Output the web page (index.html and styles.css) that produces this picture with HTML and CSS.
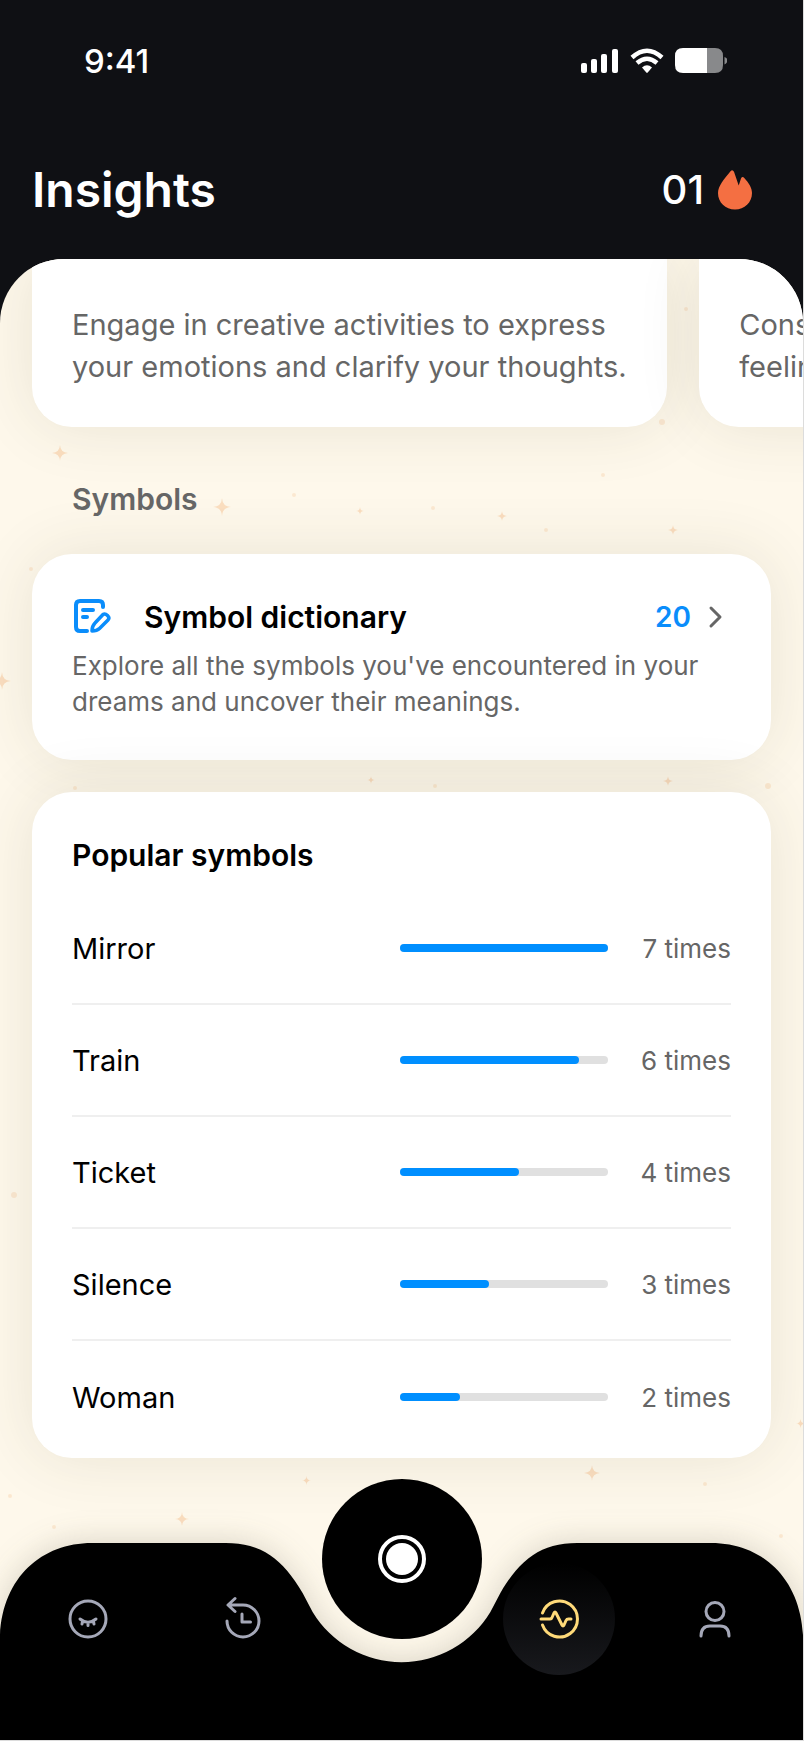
FILE: index.html
```html
<!DOCTYPE html>
<html lang="en">
<head>
    <meta charset="UTF-8">
    <meta name="viewport" content="width=device-width, initial-scale=1.0">
    <title>Insights</title>
    <link rel="stylesheet" href="styles.css">
</head>
<body>
    <div class="screen">
        <div class="status-bar">
            <span class="time">9:41</span>
            <svg width="146" height="26" viewBox="0 0 146 26" fill="#fff">
                <rect x="0" y="15" width="6" height="10" rx="2"/>
                <rect x="10" y="11" width="6" height="14" rx="2"/>
                <rect x="20" y="6" width="6" height="19" rx="2"/>
                <rect x="31" y="1" width="6" height="24" rx="2"/>
                <g fill="none" stroke="#fff" stroke-width="4.500">
                    <path d="M51 9.500Q66 -4 81 9.500"/>
                    <path d="M56 15Q66 6.500 76 15"/>
                </g>
                <path d="M61 19.500Q66 15 71 19.500L66.700 24.500Q66 25.300 65.300 24.500Z"/>
                <path d="M102 0H126V25H102Q94 25 94 17V8Q94 0 102 0Z"/>
                <path fill="#88898b" d="M126 0H134Q142 0 142 8V17Q142 25 134 25H126ZM143.500 9Q146.500 10 146.500 12.500T143.500 16.500Z"/>
            </svg>
        </div>

        <header class="header">
            <h1>Insights</h1>
            <div class="streak">
                <span>01</span>
                <svg width="34" height="40" viewBox="0 0 34 40">
                    <path fill="#f46f42" d="M12.500 1.200Q14.500 -1 16 1.800L20.700 15.500L23 8.500Q24.300 6 26.300 8C31 13 34 18 34 23C34 32.500 26.500 39.500 17 39.500S0 32.500 0 23C0 16 6 9 12.500 1.200Z"/>
                </svg>
            </div>
        </header>

        <div class="sheet">
            <svg class="stars" fill="#f9d3ad" aria-hidden="true">
                <defs>
                    <symbol id="star" viewBox="0 0 20 20">
                        <path d="M10 0Q10.500 9.500 20 10Q10.500 10.500 10 20Q9.500 10.500 0 10Q9.500 9.500 10 0Z"/>
                    </symbol>
                </defs>
                <use href="#star" x="52" y="186" width="16" height="16"/>
                <use href="#star" x="213" y="239" width="18" height="18"/>
                <use href="#star" x="-7" y="413" width="18" height="18"/>
                <use href="#star" x="584" y="1206" width="16" height="16"/>
                <use href="#star" x="175" y="1253" width="14" height="14"/>
                <use href="#star" x="497" y="252" width="10" height="10"/>
                <use href="#star" x="668" y="266" width="10" height="10"/>
                <use href="#star" x="356" y="248" width="8" height="8"/>
                <use href="#star" x="663" y="516" width="10" height="12"/>
                <use href="#star" x="367" y="516" width="8" height="10"/>
                <use href="#star" x="302" y="1217" width="9" height="9"/>
                <use href="#star" x="796" y="1160" width="9" height="9"/>
                <g opacity=".6">
                    <circle cx="686" cy="50" r="2"/>
                    <circle cx="662" cy="163" r="3"/>
                    <circle cx="294" cy="236" r="2"/>
                    <circle cx="433" cy="249" r="2"/>
                    <circle cx="546" cy="271" r="2"/>
                    <circle cx="603" cy="216" r="2"/>
                    <circle cx="31" cy="310" r="2"/>
                    <circle cx="75" cy="529" r="2"/>
                    <circle cx="768" cy="527" r="3"/>
                    <circle cx="435" cy="527" r="2"/>
                    <circle cx="14" cy="936" r="3"/>
                    <circle cx="54" cy="1268" r="2"/>
                    <circle cx="705" cy="1225" r="2"/>
                    <circle cx="781" cy="1277" r="2"/>
                    <circle cx="10" cy="1237" r="2"/>
                </g>
            </svg>

            <div class="tips">
                <p class="tip">Engage in creative activities to express<br>your emotions and clarify your thoughts.</p>
                <p class="tip">Consider sharing your<br>feelings with a friend.</p>
            </div>

            <main class="content">
                <h2 class="section-title">Symbols</h2>

                <a class="card dictionary" href="#">
                    <span class="dictionary-row">
                        <svg width="40" height="40" viewBox="0 0 40 40" fill="none" stroke="#0a8dfb" stroke-width="4" stroke-linecap="round" stroke-linejoin="round">
                            <path d="M31 10V8Q31 4 27 4H8Q4 4 4 8V30Q4 34 8 34H15"/>
                            <path d="M11 13H21M11 20H15"/>
                            <path d="M20 34Q20 29 23 26L31 17.500Q33 16 35.500 18.500T36 23L27.500 31.500Q25 34 20 34Z" stroke-width="3.500"/>
                        </svg>
                        <span class="dictionary-name">Symbol dictionary</span>
                        <span class="dictionary-count">20</span>
                        <svg width="32" height="32" viewBox="0 0 32 32" fill="none" stroke="#666" stroke-width="3" stroke-linecap="round" stroke-linejoin="round">
                            <path d="M12 7L21 16L12 25"/>
                        </svg>
                    </span>
                    <span class="dictionary-text">Explore all the symbols you've encountered in your dreams and uncover their meanings.</span>
                </a>

                <section class="card popular">
                    <h3>Popular symbols</h3>
                    <ul>
                        <li>
                            <span class="name">Mirror</span>
                            <div class="bar"><div class="fill" style="width: 100%"></div></div>
                            <span class="times">7 times</span>
                        </li>
                        <li>
                            <span class="name">Train</span>
                            <div class="bar"><div class="fill" style="width: 86%"></div></div>
                            <span class="times">6 times</span>
                        </li>
                        <li>
                            <span class="name">Ticket</span>
                            <div class="bar"><div class="fill" style="width: 57%"></div></div>
                            <span class="times">4 times</span>
                        </li>
                        <li>
                            <span class="name">Silence</span>
                            <div class="bar"><div class="fill" style="width: 43%"></div></div>
                            <span class="times">3 times</span>
                        </li>
                        <li>
                            <span class="name">Woman</span>
                            <div class="bar"><div class="fill" style="width: 29%"></div></div>
                            <span class="times">2 times</span>
                        </li>
                    </ul>
                </section>
            </main>

            <nav class="tabs">
                <svg class="tabs-shape" viewBox="0 0 804 197" preserveAspectRatio="none" aria-hidden="true">
                    <path d="M0 92C3 34 42 0 92 0H226C262 0 283 16 303 50L313 69A104 104 0 0 0 491 69L501 50C521 16 542 0 578 0H712C762 0 801 34 804 92V197H0Z"/>
                </svg>
                <button class="tab" aria-label="Dreams">
                    <svg width="40" height="40" viewBox="0 0 40 40">
                        <circle cx="20" cy="20" r="18"/>
                        <path d="M12 20Q20 26.500 28 20M14.500 22.500L14 25M20 23.500V26.500M25.500 22.500L26 25"/>
                    </svg>
                </button>
                <button class="tab" aria-label="History">
                    <svg width="40" height="40" viewBox="0 0 40 40">
                        <path d="M3 22A16 16 0 1 0 19 6H4.500M11 -0.500L4 6L11 12.500M18 15V23H26.500"/>
                    </svg>
                </button>
                <button class="record" aria-label="Record dream">
                    <svg width="48" height="48" viewBox="0 0 48 48">
                        <circle cx="24" cy="24" r="22" fill="none" stroke="#fff" stroke-width="4"/>
                        <circle cx="24" cy="24" r="16" fill="#fff"/>
                    </svg>
                </button>
                <button class="tab active" aria-label="Insights">
                    <svg width="40" height="40" viewBox="0 0 40 40">
                        <path d="M3.500 14A18 18 0 1 1 3.500 26M2 20H11Q12.500 20 13 18.500L15 14Q16 12 17 14L23 26Q24 28 25 26L27 21.500Q27.700 20 29.500 20H32"/>
                    </svg>
                </button>
                <button class="tab" aria-label="Profile">
                    <svg width="40" height="40" viewBox="0 0 40 40">
                        <circle cx="20" cy="12.500" r="9"/>
                        <path d="M6 37C6 30 9.500 27 15 27H25C30.500 27 34 30 34 37"/>
                    </svg>
                </button>
            </nav>
        </div>
    </div>
</body>
</html>
```
FILE: styles.css
```css
* {
    box-sizing: border-box;
}

body {
    margin: 0;
    padding: 0 1px 1px 0;
    background-color: #dcdcdc;
    font-family: Inter, "Liberation Sans", sans-serif;
    color: #000;
}

h1, h2, h3, p, ul {
    margin: 0;
    padding: 0;
}

button {
    border: none;
    background: none;
    padding: 0;
    cursor: pointer;
}

.screen {
    background-color: #0f1014;
    overflow: hidden;
}

.status-bar {
    height: 122px;
    padding: 0 76px 0 84px;
    display: flex;
    align-items: center;
    justify-content: space-between;
    color: #fff;
}

.time {
    font-size: 33px;
    font-weight: 500;
}

.header {
    height: 137px;
    padding: 0 51px 2px 32px;
    display: flex;
    align-items: center;
    justify-content: space-between;
    color: #fff;
}

.header h1 {
    font-size: 48px;
    font-weight: 600;
}

.streak {
    display: flex;
    align-items: center;
    gap: 14px;
    font-size: 40px;
    font-weight: 500;
}

.sheet {
    position: relative;
    background-color: #fef8eb;
    border-radius: 64px 64px 0 0;
    overflow: hidden;
}

.stars {
    position: absolute;
    top: 0;
    left: 0;
    width: 100%;
    height: 100%;
    opacity: 0.7;
}

.tips {
    position: relative;
    display: flex;
    gap: 32px;
    padding-left: 32px;
}

.tip {
    flex: 0 0 calc(82% + 3px);
    padding: 45px 40px 39px;
    background-color: #fff;
    border-radius: 0 0 40px 40px;
    box-shadow: 0 0 64px rgba(60, 60, 40, 0.11);
    color: #666;
    font-size: 29px;
    line-height: 42px;
    white-space: nowrap;
}

.content {
    position: relative;
    padding: 0 32px;
}

.section-title {
    padding: 54px 40px 37px;
    font-size: 30px;
    font-weight: 600;
    line-height: 36px;
    color: #666;
}

.card {
    display: block;
    background-color: #fff;
    border-radius: 40px;
    box-shadow: 0 0 64px rgba(60, 60, 40, 0.11);
}

.dictionary {
    padding: 39px 40px 40px;
    margin-bottom: 32px;
    color: #000;
    text-decoration: none;
}

.dictionary-row {
    display: flex;
    align-items: center;
    height: 48px;
    margin-bottom: 7px;
    font-size: 30px;
    font-weight: 600;
}

.dictionary-name {
    flex: 1;
    padding-left: 32px;
}

.dictionary-count {
    color: #0a8dfb;
    padding-right: 8px;
    font-size: 28px;
}

.dictionary-text {
    display: block;
    font-size: 26px;
    line-height: 36px;
    color: #666;
}

.popular {
    padding: 39px 40px 5px;
}

.popular h3 {
    margin-bottom: 14px;
    font-size: 30px;
    font-weight: 600;
    line-height: 48px;
}

.popular ul {
    list-style: none;
}

.popular li {
    display: grid;
    grid-template-columns: 1fr 208px 123px;
    align-items: center;
    height: 112px;
    border-bottom: 2px solid #efefef;
}

.popular li:last-child {
    border-bottom: none;
}

.name {
    font-size: 29px;
}

.bar {
    height: 8px;
    border-radius: 4px;
    background-color: #e0e0e0;
}

.fill {
    height: 8px;
    border-radius: 4px;
    background-color: #008fff;
}

.times {
    font-size: 26px;
    color: #666;
    text-align: right;
}

/* bottom navigation */
.tabs {
    position: relative;
    display: grid;
    grid-template-columns: repeat(5, 1fr);
    justify-items: center;
    align-items: start;
    height: 282px;
    padding: 21px 10px 0;
}

.tabs-shape {
    position: absolute;
    bottom: 0;
    left: 0;
    width: 100%;
    height: 197px;
    overflow: visible;
    filter: drop-shadow(0 0 16px rgba(60, 60, 40, 0.2));
}

.tab {
    position: relative;
    display: flex;
    align-items: center;
    justify-content: center;
    width: 112px;
    height: 112px;
    margin-top: 84px;
    border-radius: 50%;
}

.tab svg {
    fill: none;
    stroke: #a5a8b8;
    stroke-width: 3px;
    stroke-linecap: round;
    stroke-linejoin: round;
    overflow: visible;
}

.tab.active {
    background: linear-gradient(#000, #18191d);
}

.tab.active svg {
    stroke: #ffda79;
}

.record {
    position: relative;
    display: flex;
    align-items: center;
    justify-content: center;
    width: 160px;
    height: 160px;
    border-radius: 50%;
    background-color: #000;
}
```
